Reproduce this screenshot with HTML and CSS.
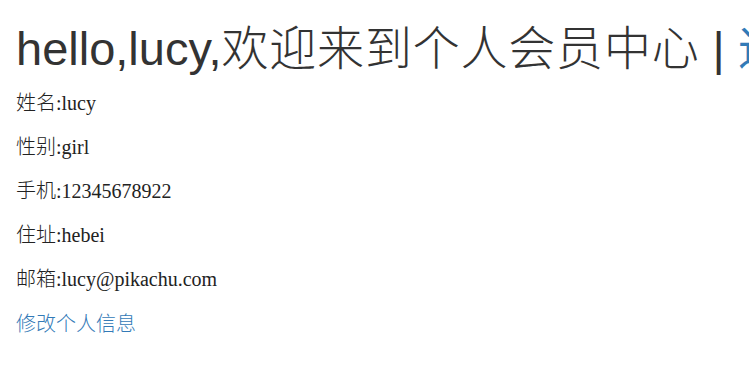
FILE: index.html
```html
<!DOCTYPE html>
<html lang="zh-CN">
<head>
<meta charset="utf-8">
<title>个人会员中心</title>
<link rel="stylesheet" href="styles.css">
</head>
<body>
<div class="page">
  <h1 class="title">hello,lucy,<span class="cn">欢迎来到个人会员中心</span> | <a class="link" href="#">退出</a></h1>
  <p class="info">姓名:lucy</p>
  <p class="info">性别:girl</p>
  <p class="info">手机:12345678922</p>
  <p class="info">住址:hebei</p>
  <p class="info">邮箱:lucy@pikachu.com</p>
  <p class="info"><a class="link edit" href="#">修改个人信息</a></p>
</div>
</body>
</html>
```
FILE: styles.css
```css
html, body {
  margin: 0;
  padding: 0;
  background: #ffffff;
  overflow: hidden;
}
.page {
  padding: 0 16px;
  color: #333333;
}
.title {
  margin: 23px 0 16px;
  font-family: "Liberation Sans", "Noto Sans CJK SC", sans-serif;
  font-size: 47px;
  font-weight: normal;
  line-height: 52px;
  white-space: nowrap;
  color: #333333;
}
.cn {
  font-weight: 300;
  letter-spacing: 0.8px;
}
.info {
  margin: 0 0 20px;
  font-family: "Liberation Serif", "Noto Sans CJK SC", serif;
  font-size: 20px;
  font-weight: 300;
  line-height: 24px;
  color: #222222;
}
.link {
  color: #337ab7;
  text-decoration: none;
}
.edit {
  font-family: "Noto Sans CJK SC", sans-serif;
  font-weight: 300;
  font-size: 20px;
}
```
